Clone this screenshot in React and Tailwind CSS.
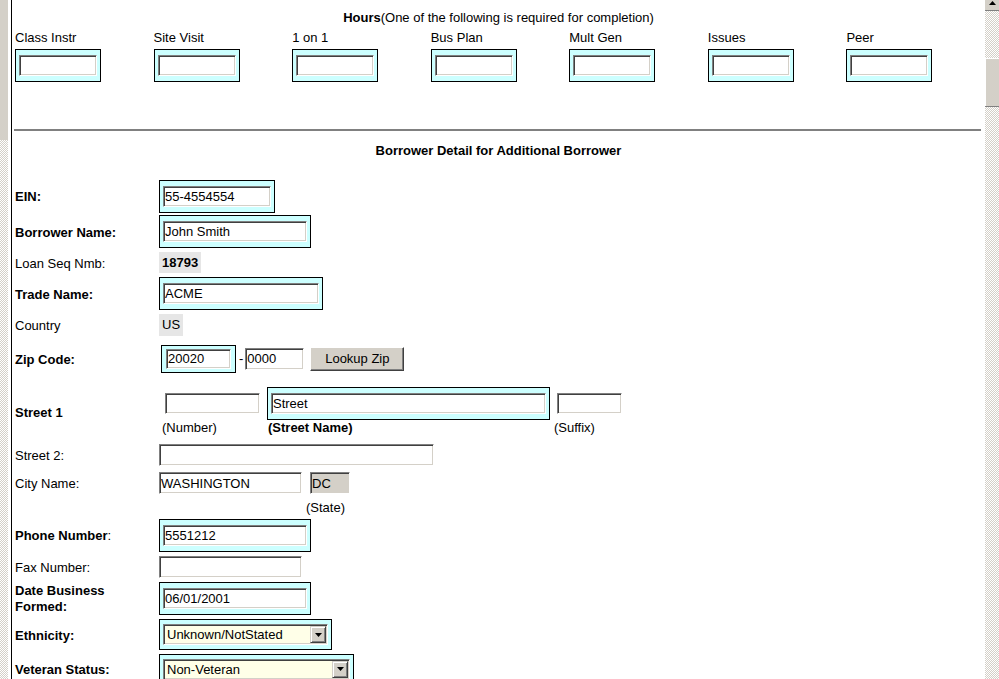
import React from "react";

const INSET =
  "box-border border border-solid border-t-[#808080] border-l-[#808080] border-b-white border-r-white shadow-[inset_1px_1px_0_#404040,inset_-1px_-1px_0_#d4d0c8]";
const CHECKER =
  "bg-[conic-gradient(#d4d0c8_25%,#ffffff_0_50%,#d4d0c8_0_75%,#ffffff_0)] bg-[length:2px_2px]";

function Input({ className = "", value = "", bg = "bg-white" }) {
  return (
    <input
      readOnly
      defaultValue={value}
      className={`${INSET} ${bg} block px-[1px] text-[13px] leading-none text-black outline-none ${className}`}
    />
  );
}

function Box({ children, className = "px-[3px] py-[5px]" }) {
  return (
    <div className={`inline-flex border border-black bg-[#ccffff] ${className}`}>
      {children}
    </div>
  );
}

function Select({ value, className = "" }) {
  return (
    <div className={`${INSET} flex items-center bg-[#ffffe8] ${className}`}>
      <span className="flex-1 pl-[3px] text-[13px] leading-none">{value}</span>
      <span className="mr-[1px] flex h-[17px] w-[16px] items-center justify-center border border-t-[#d4d0c8] border-l-[#d4d0c8] border-b-[#404040] border-r-[#404040] bg-[#d4d0c8] shadow-[inset_1px_1px_0_#ffffff,inset_-1px_-1px_0_#808080]">
        <svg width="7" height="4" viewBox="0 0 7 4">
          <path d="M0 0h7L3.5 4z" fill="#000" />
        </svg>
      </span>
    </div>
  );
}

function Row({ h, label, bold = false, children }) {
  return (
    <div className={`flex ${h}`}>
      <div
        className={`flex w-[147px] shrink-0 items-center pl-[3px] pt-[2px] leading-[16px] ${
          bold ? "font-bold" : ""
        }`}
      >
        {label}
      </div>
      <div className="flex items-center">{children}</div>
    </div>
  );
}

const hours = ["Class Instr", "Site Visit", "1 on 1", "Bus Plan", "Mult Gen", "Issues", "Peer"];

export default function App() {
  return (
    <div className="flex h-[679px] w-[999px] overflow-hidden bg-white font-['Liberation_Sans',Arial,sans-serif] text-[13px] text-black">
      {/* left frame edge */}
      <div className="flex w-[12px] shrink-0">
        <div className="flex w-[8px] flex-col">
          <div className="h-[140px] bg-[#d4d0c8]" />
          <div className={`flex-1 ${CHECKER}`} />
        </div>
        <div className="w-[3px] bg-white" />
        <div className="w-[1px] bg-black" />
      </div>

      {/* main */}
      <main className="w-[973px] shrink-0 overflow-hidden">
        <div className="pt-[10px] text-center leading-[16px]">
          <b>Hours</b>(One of the following is required for completion)
        </div>
        <div className="mt-[3px] grid grid-cols-7 pl-[3px]">
          {hours.map((l) => (
            <div key={l}>
              <div className="pt-[1px] leading-[16px]">{l}</div>
              <div className="mt-[3px]">
                <Box>
                  <Input className="h-[21px] w-[78px]" />
                </Box>
              </div>
            </div>
          ))}
        </div>

        <div className="ml-[2px] mr-[4px] mt-[47px] h-[2px] bg-[#808080]" />

        <div className="mt-[12px] text-center font-bold leading-[16px]">
          Borrower Detail for Additional Borrower
        </div>

        <div className="mt-[19px]">
          <Row h="h-[36px]" label="EIN:" bold>
            <Box>
              <Input className="h-[21px] w-[108px]" value="55-4554554" />
            </Box>
          </Row>
          <Row h="h-[35px]" label="Borrower Name:" bold>
            <Box>
              <Input className="h-[21px] w-[144px]" value="John Smith" />
            </Box>
          </Row>
          <Row h="h-[27px]" label="Loan Seq Nmb:">
            <span className="bg-[#e6e6e6] px-[3px] font-bold leading-[21px]">18793</span>
          </Row>
          <Row h="h-[35px]" label="Trade Name:" bold>
            <Box>
              <Input className="h-[21px] w-[156px]" value="ACME" />
            </Box>
          </Row>
          <Row h="h-[28px]" label="Country">
            <span className="bg-[#e6e6e6] px-[3px] leading-[22px]">US</span>
          </Row>
          <Row h="h-[39px]" label="Zip Code:" bold>
            <div className="ml-[2px]">
              <Box className="px-[4px] py-[3px]">
                <Input className="h-[20px] w-[65px]" value="20020" />
              </Box>
            </div>
            <span className="ml-[3px] leading-[16px]">-</span>
            <Input className="ml-[2px] h-[22px] w-[59px]" value="0000" />
            <button className="ml-[6px] box-border h-[24px] w-[94px] border border-t-white border-l-white border-b-[#404040] border-r-[#404040] bg-[#d4d0c8] text-[13px] leading-none shadow-[inset_-1px_-1px_0_#808080]">
              Lookup Zip
            </button>
          </Row>

          {/* Street 1 */}
          <div className="flex h-[62px]">
            <div className="w-[147px] shrink-0 pl-[3px] pt-[27px] font-bold leading-[16px]">
              Street 1
            </div>
            <div className="flex pt-[9px]">
              <div className="ml-[3px] flex flex-col">
                <div className="flex h-[33px] items-center">
                  <Input className="ml-[3px] h-[21px] w-[95px]" />
                </div>
                <div className="leading-[16px]">(Number)</div>
              </div>
              <div className="ml-[7px] flex flex-col">
                <Box>
                  <Input className="h-[21px] w-[275px]" value="Street" />
                </Box>
                <div className="pl-[1px] font-bold leading-[16px]">(Street Name)</div>
              </div>
              <div className="ml-[4px] flex flex-col">
                <div className="flex h-[33px] items-center">
                  <Input className="ml-[3px] h-[21px] w-[65px]" />
                </div>
                <div className="leading-[16px]">(Suffix)</div>
              </div>
            </div>
          </div>

          <Row h="h-[29px]" label="Street 2:">
            <Input className="h-[22px] w-[275px]" />
          </Row>

          {/* City */}
          <div className="flex h-[46px]">
            <div className="w-[147px] shrink-0 pl-[3px] pt-[7px] leading-[16px]">City Name:</div>
            <div className="flex items-start pt-[3px]">
              <Input className="h-[22px] w-[143px]" value="WASHINGTON" />
              <div className="ml-[4px] flex flex-col">
                <Input className="ml-[4px] h-[22px] w-[40px]" bg="bg-[#d4d0c8]" value="DC" />
                <div className="mt-[6px] leading-[16px]">(State)</div>
              </div>
            </div>
          </div>

          <Row
            h="h-[40px]"
            label={
              <span>
                <b>Phone Number</b>:
              </span>
            }
          >
            <Box>
              <Input className="h-[21px] w-[144px]" value="5551212" />
            </Box>
          </Row>
          <Row h="h-[23px]" label="Fax Number:">
            <Input className="h-[22px] w-[143px]" />
          </Row>
          <Row
            h="h-[40px]"
            bold
            label={
              <span>
                Date Business
                <br />
                Formed:
              </span>
            }
          >
            <Box>
              <Input className="h-[21px] w-[144px]" value="06/01/2001" />
            </Box>
          </Row>
          <Row h="h-[33px]" label="Ethnicity:" bold>
            <Box className="px-[3px] py-[4px]">
              <Select className="h-[21px] w-[165px]" value="Unknown/NotStated" />
            </Box>
          </Row>
          <Row h="h-[36px]" label="Veteran Status:" bold>
            <Box className="px-[3px] py-[4px]">
              <Select className="h-[21px] w-[187px]" value="Non-Veteran" />
            </Box>
          </Row>
        </div>
      </main>

      {/* right scrollbar */}
      <div className="flex w-[14px] shrink-0 flex-col">
        <div className="flex h-[11px] justify-center border-b border-[#808080] bg-[#d4d0c8] pt-[1px]">
          <svg width="7" height="4" viewBox="0 0 7 4">
            <path d="M3.5 0L7 4H0z" fill="#000" />
          </svg>
        </div>
        <div className={`h-[47px] ${CHECKER}`} />
        <div className="box-border h-[49px] border-b border-[#808080] bg-[#d4d0c8] shadow-[inset_1px_1px_0_#ffffff]" />
        <div className={`flex-1 ${CHECKER}`} />
      </div>
    </div>
  );
}
